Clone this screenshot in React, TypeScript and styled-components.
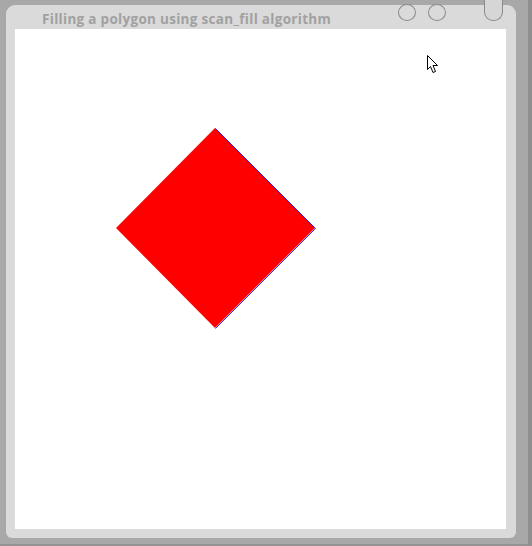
import React from 'react'
import styled, { createGlobalStyle } from 'styled-components'

const Global = createGlobalStyle`
  html, body {
    margin: 0;
    padding: 0;
    background: #a8a8a8;
  }
`

const Screen = styled.div`
  box-sizing: border-box;
  width: 532px;
  height: 546px;
  padding: 5px 12px 6px 6px;
  background: #a8a8a8;
  border-right: 4px solid #8f8f8f;
  border-bottom: 2px solid #929292;
`

const Window = styled.div`
  position: relative;
  box-sizing: border-box;
  width: 510px;
  height: 533px;
  display: flex;
  flex-direction: column;
  background: #dadada;
  border-radius: 9px 9px 6px 6px;
  padding: 0 10px 9px 9px;
`

const TitleBar = styled.div`
  height: 24px;
  display: flex;
  align-items: flex-start;
  padding-left: 27px;
`

const Title = styled.div`
  font-family: 'Open Sans', 'DejaVu Sans', sans-serif;
  font-weight: 700;
  font-size: 13.5px;
  letter-spacing: 0.3px;
  line-height: 15px;
  color: #a1a1a1;
  margin-top: 7px;
  white-space: nowrap;
`

const Controls = styled.div`
  display: flex;
  gap: 12px;
  margin-left: auto;
  margin-right: 60px;
  margin-top: -1px;
`

const CircleButton = styled.div`
  box-sizing: border-box;
  width: 18px;
  height: 17px;
  border: 1px solid #8a8a8a;
  border-radius: 50%;
  background: #dadada;
`

const Pill = styled.div`
  position: absolute;
  top: -5px;
  left: 478px;
  box-sizing: border-box;
  width: 19px;
  height: 21px;
  border: 1px solid #8a8a8a;
  border-top: none;
  border-radius: 0 0 9px 9px;
  background: #d6d6d6;
`

const Canvas = styled.div`
  position: relative;
  flex: 1;
  background: #ffffff;
`

const Drawing = styled.svg`
  display: block;
  width: 100%;
  height: 100%;
`

const Cursor = styled.svg`
  position: absolute;
  left: 411px;
  top: 25px;
`

export default function App() {
  return (
    <>
      <Global />
      <Screen>
        <Window>
          <Pill />
          <TitleBar>
            <Title>Filling a polygon using scan_fill algorithm</Title>
            <Controls>
              <CircleButton />
              <CircleButton />
            </Controls>
          </TitleBar>
          <Canvas>
            <Drawing viewBox="0 0 491 500">
              <polygon points="200,99 300,199 200,299 101,199" fill="#ff0000" />
              <polyline
                points="200.5,99.5 300.5,199.5 200.5,299.5"
                fill="none"
                stroke="#0000ee"
                strokeWidth="0.8"
              />
            </Drawing>
            <Cursor width="14" height="20" viewBox="0 0 14 20">
              <path
                d="M1.5 1.5 L1.5 15.5 L4.5 12.5 L7 18.5 L9.5 17.5 L7 11.5 L11.5 11.5 Z"
                fill="#ffffff"
                stroke="#000000"
                strokeWidth="1"
                strokeLinejoin="miter"
              />
            </Cursor>
          </Canvas>
        </Window>
      </Screen>
    </>
  )
}
